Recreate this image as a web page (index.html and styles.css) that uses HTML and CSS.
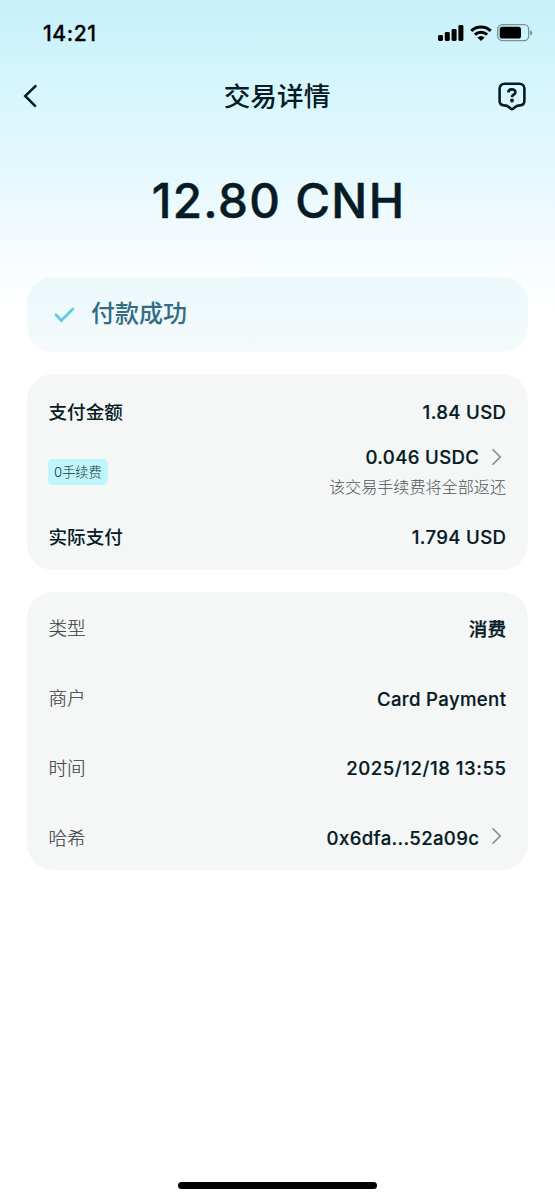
FILE: index.html
```html
<!DOCTYPE html>
<html lang="zh-CN">
<head>
<meta charset="utf-8">
<title>交易详情</title>
<link rel="stylesheet" href="styles.css">
</head>
<body>
<div class="screen">
  <div class="status-bar">
    <span class="clock">14:21</span>
    <div class="status-icons">
      <svg class="signal" width="26" height="16" viewBox="0 0 26 16"><rect x="0" y="10" width="5" height="6" rx="1.4"/><rect x="6.8" y="7" width="5" height="9" rx="1.4"/><rect x="13.6" y="4" width="5" height="12" rx="1.4"/><rect x="20.4" y="0" width="5" height="16" rx="1.4"/></svg>
      <svg class="wifi" width="22" height="16" viewBox="0 0 22 16"><path d="M1.3 5.8a14 14 0 0 1 19.4 0M4.9 9.6a9 9 0 0 1 12.2 0" fill="none" stroke="#000" stroke-width="3"/><path d="M7.4 12.6a5.4 5.4 0 0 1 7.2 0L11 16z"/></svg>
      <svg class="battery" width="36" height="18" viewBox="0 0 36 18"><rect x=".7" y=".7" width="31" height="16" rx="4.6" fill="none" stroke="#7b9297" stroke-width="1.3"/><rect x="2.7" y="2.8" width="21.3" height="11.8" rx="2.6"/><path d="M33.3 6.2c2.4.8 2.4 4.4 0 5.2z" fill="#6f878c"/></svg>
    </div>
  </div>
  <header class="nav">
    <svg class="back" width="28" height="26" viewBox="0 0 28 26"><path d="M14.2 2.3 3.2 13 13.8 23.7" fill="none" stroke="#061b25" stroke-width="2.5"/></svg>
    <h1 class="title">交易详情</h1>
    <svg class="help" width="28" height="29" viewBox="0 0 28 29" fill="none" stroke="#061b25" stroke-width="2.6" stroke-linejoin="round"><path d="M6.6 1.8h14.8c3 0 5 2 5 5v12c0 3-1.8 4.6-4.6 4.6-3.4 0-4.2 1-5.6 2.5-1.5 1.6-2.9 1.6-4.4 0-1.4-1.5-2.2-2.5-5.6-2.5-2.8 0-4.6-1.6-4.6-4.6v-12c0-3 2-5 5-5z"/><path d="M10.3 10.4c.2-4.2 7.2-3.9 7.1-.2 0 2.6-3.3 2.2-3.5 4.9"/><circle cx="14" cy="18.5" r="1.9" fill="#061b25" stroke="none"/></svg>
  </header>
  <div class="amount">12.80 CNH</div>
  <main class="cards">
    <section class="card result">
      <svg class="check" width="22" height="18" viewBox="0 0 22 18"><path d="M2 8.8 7.4 14.4 18.8 3" fill="none" stroke="#62c9e2" stroke-width="2.8" stroke-linecap="round"/></svg>
      <span class="result-text">付款成功</span>
    </section>
    <section class="card payment">
      <div class="row"><span class="label strong">支付金额</span><span class="value">1.84 USD</span></div>
      <div class="row fee">
        <span class="tag">0手续费</span>
        <div class="fee-info">
          <div class="linked"><span class="value">0.046 USDC</span><svg class="chevron" width="11" height="18" viewBox="0 0 11 18"><path d="M1.4 1.2 9.2 9 1.4 16.8"/></svg></div>
          <span class="note">该交易手续费将全部返还</span>
        </div>
      </div>
      <div class="row"><span class="label strong">实际支付</span><span class="value">1.794 USD</span></div>
    </section>
    <section class="card details">
      <div class="row"><span class="label">类型</span><span class="value cjk">消费</span></div>
      <div class="row"><span class="label">商户</span><span class="value">Card Payment</span></div>
      <div class="row"><span class="label">时间</span><span class="value time">2025/12/18 13:55</span></div>
      <div class="row"><span class="label">哈希</span><div class="linked hash"><span class="value">0x6dfa...52a09c</span><svg class="chevron" width="11" height="18" viewBox="0 0 11 18"><path d="M1.4 1.2 9.2 9 1.4 16.8"/></svg></div></div>
    </section>
  </main>
  <div class="home-indicator"></div>
</div>
</body>
</html>
```
FILE: styles.css
```css
* { box-sizing: border-box; }
body { margin: 0; background: #fff; }
.screen {
  width: 555px; height: 1200px;
  display: flex; flex-direction: column;
  background: linear-gradient(180deg, #c6f0fa 0, #d5f5fc 75px, #e3f8fe 165px, #f3fbfe 235px, #fff 312px);
  font-family: Inter, "Noto Sans CJK SC", sans-serif;
  color: #061b25;
}
.status-bar {
  height: 66px; padding: 0 22px 0 43px;
  display: flex; justify-content: space-between; align-items: center;
}
.clock { font-size: 21px; font-weight: 500; line-height: 26px; letter-spacing: .6px; color: #000; padding-top: 2px; -webkit-text-stroke: .3px #000; }
.status-icons { display: flex; align-items: center; gap: 5px; }
.signal { margin-right: 1px; }
.nav {
  height: 60px; padding: 0 29px 0 22px;
  display: flex; justify-content: space-between; align-items: center;
}
.title { margin: 0; font-size: 26.7px; font-weight: 500; line-height: 40px; padding-left: 6px; }
.amount {
  height: 150px; padding: 45px 0 0 2px;
  text-align: center; font-size: 47.5px; font-weight: 500; line-height: 60px; letter-spacing: 1.35px;
  -webkit-text-stroke: .5px #061b25;
}
.cards { display: flex; flex-direction: column; gap: 22px; padding: 1px 27px 0; }
.card { border-radius: 26px; background: #f5f7f7; padding: 0 22px; }
.result {
  height: 75px; display: flex; align-items: center; gap: 15px; padding-left: 27px;
  background: linear-gradient(180deg, #ecf8fb, #f4fafc);
}
.result-text { font-size: 24px; font-weight: 500; line-height: 36px; color: #316e83; padding-bottom: 1px; }
.row { display: flex; justify-content: space-between; align-items: center; }
.label {
  font-size: 18.6px; line-height: 26px; font-weight: 300; color: #3c4448;
  margin-left: -.5px; padding-bottom: 1px;
  -webkit-text-stroke: .15px #3c4448;
}
.strong { color: #061b25; font-weight: 500; -webkit-text-stroke: 0; }
.value {
  font-size: 18.6px; line-height: 28px; font-weight: 500; letter-spacing: .35px; margin-right: -.35px;
  -webkit-text-stroke: .2px #061b25;
}
.time { letter-spacing: .53px; margin-right: -.53px; }
.cjk { letter-spacing: 0; margin-right: 0; -webkit-text-stroke: .3px #061b25; }
.payment { height: 196px; padding-top: 24px; }
.fee { height: 97px; }
.tag {
  height: 26px; padding: 0 6px; border-radius: 5px; margin: 0 0 5px -1px;
  background: #bff6fd; color: #17343c; font-size: 13.2px; line-height: 27px; font-weight: 300;
}
.fee-info { display: flex; flex-direction: column; align-items: flex-end; gap: 3px; padding-bottom: 6px; }
.linked { display: flex; align-items: center; gap: 12px; padding-right: 4px; }
.chevron { fill: none; stroke: #858a8c; stroke-width: 1.6; }
.hash .chevron { margin-bottom: 4px; }
.note { font-size: 16.1px; line-height: 26px; font-weight: 300; color: #4e5458; }
.details { height: 278px; padding-top: 2px; }
.details .row { height: 69.8px; }
.home-indicator {
  width: 199px; height: 7px; border-radius: 4px; background: #000;
  margin: auto auto 11px;
}
```
